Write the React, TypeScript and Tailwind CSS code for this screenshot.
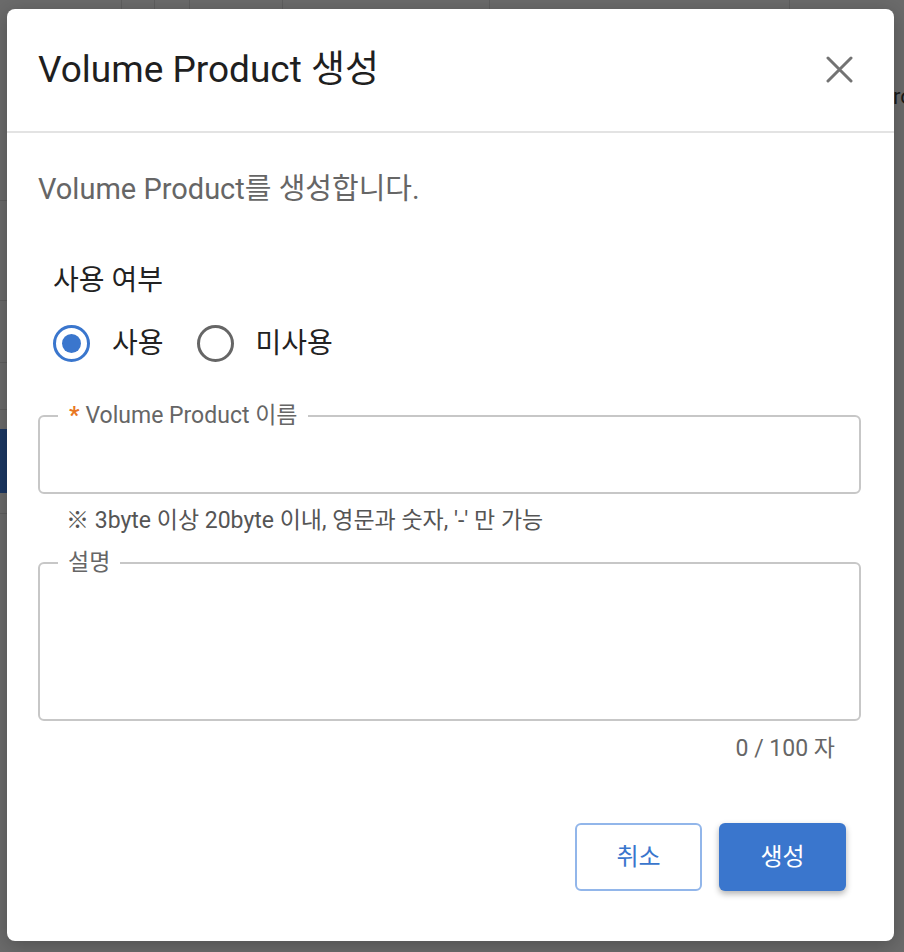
import { useState } from 'react';

const font = { fontFamily: 'Roboto, "Noto Sans CJK KR", sans-serif' };

function Radio({ checked, label, onClick }: { checked: boolean; label: string; onClick: () => void }) {
  return (
    <button type="button" onClick={onClick} className="flex items-center gap-[22px]">
      <span
        className={`flex h-[37px] w-[37px] items-center justify-center rounded-full border-[3.5px] ${
          checked ? 'border-[#3a76cd]' : 'border-[#666666]'
        }`}
      >
        {checked && <span className="h-[19px] w-[19px] rounded-full bg-[#3a76cd]" />}
      </span>
      <span className="text-[28px] leading-[36px] text-[#222222]">{label}</span>
    </button>
  );
}

export default function App() {
  const [used, setUsed] = useState(true);
  const [desc, setDesc] = useState('');

  return (
    <div className="relative h-[952px] w-[904px] overflow-hidden bg-[#6b6b6b]" style={font}>
      {/* dimmed page behind the dialog */}
      <div className="absolute inset-x-0 top-0 flex h-[9px]">
        <div className="w-[122px] border-r border-[#5f5f5f]" />
        <div className="w-[33px] border-r border-[#5f5f5f]" />
        <div className="w-[35px] border-r border-[#5f5f5f]" />
        <div className="w-[93px] border-r border-[#5f5f5f]" />
        <div className="w-[207px] border-r border-[#5f5f5f]" />
        <div className="w-[300px] border-r border-[#5f5f5f]" />
      </div>
      <div className="absolute left-0 top-[200px] h-px w-[7px] bg-[#5f5f5f]" />
      <div className="absolute left-0 top-[300px] h-px w-[7px] bg-[#5f5f5f]" />
      <div className="absolute left-0 top-[362px] h-px w-[7px] bg-[#5f5f5f]" />
      <div className="absolute left-0 top-[409px] h-px w-[7px] bg-[#5f5f5f]" />
      <div className="absolute left-0 top-[429px] h-[64px] w-[7px] bg-[#1b3763]" />
      <div className="absolute left-0 top-[513px] h-px w-[7px] bg-[#5f5f5f]" />
      <div className="absolute left-[893px] top-[86px] text-[22px] leading-none text-[#1a1a1a]">ro</div>

      <div className="absolute left-[7px] top-[9px] flex h-[932px] w-[887px] flex-col rounded-[8px] bg-white shadow-[0_4px_20px_rgba(0,0,0,0.25)]">
        <div className="flex h-[124px] items-center justify-between border-b-2 border-[#e3e3e3] pl-[31px] pr-[41px]">
          <h1 className="text-[37px] font-normal leading-[44px] text-[#1f1f1f]">Volume Product 생성</h1>
          <button type="button" aria-label="닫기" className="mb-[2px]">
            <svg width="27" height="27" viewBox="0 0 27 27" fill="none">
              <path d="M2 2 L25 25 M25 2 L2 25" stroke="#737373" strokeWidth="3" strokeLinecap="round" />
            </svg>
          </button>
        </div>

        <div className="flex flex-1 flex-col px-[31px] pt-[38px]">
          <p className="text-[29px] leading-[36px] text-[#666666]">Volume Product를 생성합니다.</p>

          <div className="mt-[56px] pl-[15px]">
            <p className="text-[28px] leading-[36px] text-[#222222]">사용 여부</p>
            <div className="mt-[26px] flex items-center gap-[33px]">
              <Radio checked={used} label="사용" onClick={() => setUsed(true)} />
              <Radio checked={!used} label="미사용" onClick={() => setUsed(false)} />
            </div>
          </div>

          <fieldset className="mt-[42px] h-[90px] w-[823px] rounded-[6px] border-2 border-[#c7c7c7]">
            <legend className="ml-[18px] px-[11px] text-[23px] leading-[24px] text-[#666666]">
              <span className="mr-[6px] font-bold text-[#e87722]">*</span>Volume Product 이름
            </legend>
            <input className="h-[60px] w-full bg-transparent px-[20px] text-[22px] outline-none" />
          </fieldset>
          <p className="mt-[12px] pl-[28px] text-[23px] leading-[30px] text-[#555555]">
            ※ 3byte 이상 20byte 이내, 영문과 숫자, '-' 만 가능
          </p>

          <fieldset className="mt-[15px] h-[170px] w-[823px] rounded-[6px] border-2 border-[#c7c7c7]">
            <legend className="ml-[18px] px-[10px] text-[23px] leading-[24px] text-[#666666]">설명</legend>
            <textarea
              value={desc}
              maxLength={100}
              onChange={(e) => setDesc(e.target.value)}
              className="h-[140px] w-full resize-none bg-transparent px-[20px] text-[22px] outline-none"
            />
          </fieldset>
          <p className="mt-[13px] pr-[28px] text-right text-[23px] leading-[30px] text-[#666666]">
            {desc.length} / 100 자
          </p>

          <div className="mt-auto mb-[50px] flex justify-end gap-[17px] pr-[17px]">
            <button
              type="button"
              className="h-[68px] w-[127px] rounded-[6px] border-2 border-[#92b6ea] text-[24px] text-[#3a76cd]"
            >
              취소
            </button>
            <button
              type="button"
              className="h-[68px] w-[127px] rounded-[6px] bg-[#3a76cd] text-[24px] text-white shadow-[0_3px_6px_rgba(0,0,0,0.3)]"
            >
              생성
            </button>
          </div>
        </div>
      </div>
    </div>
  );
}
